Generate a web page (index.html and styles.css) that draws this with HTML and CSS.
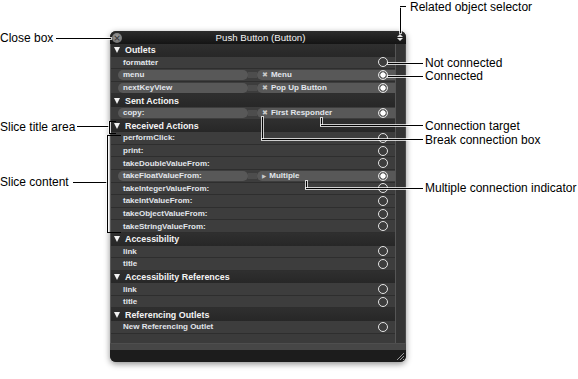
FILE: index.html
```html
<!DOCTYPE html>
<html>
<head>
  <title>Connections Panel</title>
  <link rel="stylesheet" href="styles.css">
</head>
<body>
  <div class="canvas">
    <div class="panel">
      <div class="titlebar">
        <span class="close-box">&#x00D7;</span>
        <span class="title">Push Button (Button)</span>
        <span class="selector"><i class="up"></i><i class="down"></i></span>
      </div>

      <div class="panel-body">
        <div class="slices">
          <div class="slice-title"><i class="tri"></i>Outlets</div>
          <div class="row"><span class="name">formatter</span><span class="port"></span></div>
          <div class="row linked">
            <span class="name pill">menu</span><span class="joint"></span>
            <span class="target pill"><b class="mark">&#x2716;</b>Menu<span class="port on"></span></span>
          </div>
          <div class="row linked">
            <span class="name pill">nextKeyView</span><span class="joint"></span>
            <span class="target pill"><b class="mark">&#x2716;</b>Pop Up Button<span class="port on"></span></span>
          </div>

          <div class="slice-title"><i class="tri"></i>Sent Actions</div>
          <div class="row linked">
            <span class="name pill">copy:</span><span class="joint"></span>
            <span class="target pill"><b class="mark">&#x2716;</b>First Responder<span class="port on"></span></span>
          </div>

          <div class="slice-title"><i class="tri"></i>Received Actions</div>
          <div class="row"><span class="name">performClick:</span><span class="port"></span></div>
          <div class="row"><span class="name">print:</span><span class="port"></span></div>
          <div class="row"><span class="name">takeDoubleValueFrom:</span><span class="port"></span></div>
          <div class="row linked">
            <span class="name pill">takeFloatValueFrom:</span><span class="joint"></span>
            <span class="target pill"><b class="mark multi">&#x25B6;</b>Multiple<span class="port on"></span></span>
          </div>
          <div class="row"><span class="name">takeIntegerValueFrom:</span><span class="port"></span></div>
          <div class="row"><span class="name">takeIntValueFrom:</span><span class="port"></span></div>
          <div class="row"><span class="name">takeObjectValueFrom:</span><span class="port"></span></div>
          <div class="row"><span class="name">takeStringValueFrom:</span><span class="port"></span></div>

          <div class="slice-title"><i class="tri"></i>Accessibility</div>
          <div class="row"><span class="name">link</span><span class="port"></span></div>
          <div class="row"><span class="name">title</span><span class="port"></span></div>

          <div class="slice-title"><i class="tri"></i>Accessibility References</div>
          <div class="row"><span class="name">link</span><span class="port"></span></div>
          <div class="row"><span class="name">title</span><span class="port"></span></div>

          <div class="slice-title"><i class="tri"></i>Referencing Outlets</div>
          <div class="row"><span class="name">New Referencing Outlet</span><span class="port"></span></div>
        </div>
        <div class="scroller"></div>
      </div>

      <div class="band"></div>
      <div class="footer">
        <svg class="grip" width="8" height="8" viewBox="0 0 8 8">
          <path d="M1 8 L8 1 M4 8 L8 4 M7 8 L8 7" stroke="#9a9a9a" stroke-width="1"/>
        </svg>
      </div>
    </div>

    <!-- callouts, left side -->
    <div class="label l-close">Close box</div>
    <div class="wire w-close"></div>

    <div class="label l-title">Slice title area</div>
    <div class="wire w-title"></div>
    <div class="bracket b-title"></div>

    <div class="label l-content">Slice content</div>
    <div class="wire w-content"></div>
    <div class="bracket b-content"></div>

    <!-- callouts, right side -->
    <div class="label l-selector">Related object selector</div>
    <div class="wire w-selector-v"></div>
    <div class="wire w-selector-h"></div>

    <div class="label l-free">Not connected</div>
    <div class="wire w-free"></div>

    <div class="label l-linked">Connected</div>
    <div class="wire w-linked"></div>

    <div class="label l-target">Connection target</div>
    <div class="wire w-target-v"></div>
    <div class="wire w-target-h"></div>

    <div class="label l-break">Break connection box</div>
    <div class="wire w-break-v"></div>
    <div class="wire w-break-h"></div>

    <div class="label l-multi">Multiple connection indicator</div>
    <div class="wire w-multi-v"></div>
    <div class="wire w-multi-h"></div>
  </div>
</body>
</html>
```

FILE: styles.css
```css
body {
  margin: 0;
  background: #fff;
  font-family: "Liberation Sans", Arial, sans-serif;
}

.canvas {
  position: relative;
  width: 578px;
  height: 379px;
  padding: 31px 0 0 110px;
  box-sizing: border-box;
}

/* the inspector panel */
.panel {
  width: 296px;
  height: 331px;
  display: flex;
  flex-direction: column;
  border-radius: 6px;
  background: #3b3b3b;
  box-shadow: 0 2px 6px rgba(0, 0, 0, 0.45);
  overflow: hidden;
}

.titlebar {
  height: 13px;
  display: flex;
  align-items: center;
  padding: 0 3px 0 1px;
  background: linear-gradient(#2c2c2c, #141414);
  flex-shrink: 0;
}

.close-box {
  width: 10px;
  height: 10px;
  margin-left: 1px;
  border-radius: 50%;
  background: radial-gradient(circle at 50% 40%, #a0a0a0, #646464);
  font-family: "DejaVu Sans", sans-serif;
  font-size: 9px;
  font-weight: bold;
  line-height: 10px;
  text-align: center;
  color: #3e3e3e;
}

.title {
  flex: 1;
  text-align: center;
  font-size: 9.7px;
  color: #f2f2f2;
  padding-left: 2px;
}

.selector {
  width: 6px;
  display: flex;
  flex-direction: column;
  align-items: center;
  gap: 1px;
}

.selector i {
  width: 0;
  height: 0;
  border-left: 3px solid transparent;
  border-right: 3px solid transparent;
}

.selector .up { border-bottom: 3px solid #e6e6e6; }
.selector .down { border-top: 3px solid #e6e6e6; }

.panel-body {
  flex: 1;
  display: flex;
  border-left: 1px solid #5a5a5a;
  border-right: 1px solid #4a4a4a;
}

.slices {
  width: 284px;
  background: #3b3b3b;
}

.scroller {
  flex: 1;
  background: #343434;
  border-left: 1px solid #555;
}

.slice-title {
  height: 12.6px;
  display: flex;
  align-items: center;
  padding-left: 3px;
  background: linear-gradient(#2f2f2f, #272727);
  font-size: 8.9px;
  font-weight: bold;
  color: #f4f4f4;
}

.tri {
  width: 0;
  height: 0;
  margin-right: 5px;
  border-left: 3.5px solid transparent;
  border-right: 3.5px solid transparent;
  border-top: 6px solid #f2f2f2;
}

.row {
  height: 12.6px;
  display: flex;
  align-items: center;
  padding-left: 12px;
  box-sizing: border-box;
  border-bottom: 1px solid #2e2e2e;
  background: #3d3d3d;
  font-size: 8px;
  font-weight: bold;
  color: #e2e6ec;
}

.row.linked {
  padding-left: 7px;
}

.pill {
  height: 10px;
  display: flex;
  align-items: center;
  background: #585858;
}

.name.pill {
  width: 130px;
  padding-left: 5px;
  box-sizing: border-box;
  border-radius: 5px;
}

.joint {
  width: 9px;
  height: 6px;
  background: #4d4d4d;
}

.target.pill {
  flex: 1;
  padding-left: 5px;
  border-radius: 5px 0 0 5px;
}

.mark {
  font-family: "DejaVu Sans", sans-serif;
  font-size: 7px;
  color: #c8c8c8;
  margin-right: 3px;
}

.mark.multi {
  font-size: 5.5px;
}

.port {
  width: 10px;
  height: 10px;
  margin-left: auto;
  margin-right: 7px;
  box-sizing: border-box;
  border: 1.4px solid #e4e4e4;
  border-radius: 50%;
}

.port.on {
  background: radial-gradient(circle, #fff 0 2.4px, #6a6a6a 2.8px);
}

.band {
  height: 7px;
  background: #464646;
  border-top: 1px solid #4e4e4e;
  box-sizing: border-box;
}

.footer {
  height: 12px;
  display: flex;
  justify-content: flex-end;
  align-items: flex-end;
  padding: 0 2px 2px 0;
  box-sizing: border-box;
  background: #1c1c1c;
}

/* callouts */
.label {
  position: absolute;
  font-size: 12px;
  line-height: 14px;
  color: #000;
  white-space: nowrap;
}

.wire {
  position: absolute;
  background: #000;
  box-shadow: 0 0 0 1px rgba(255, 255, 255, 0.75);
}

.bracket {
  position: absolute;
  border: 1px solid #000;
  border-right: none;
  box-shadow: -1px 0 0 rgba(255, 255, 255, 0.75), inset 1px 0 0 rgba(255, 255, 255, 0.75);
}

.l-close { left: 0; top: 31px; }
.w-close { left: 56px; top: 38px; width: 55px; height: 1px; }

.l-title { left: 0; top: 120px; }
.w-title { left: 77px; top: 126px; width: 32px; height: 1px; }
.b-title { left: 109px; top: 121px; width: 6px; height: 11px; }

.l-content { left: 0; top: 175px; }
.w-content { left: 73px; top: 182px; width: 34px; height: 1px; }
.b-content { left: 107px; top: 135px; width: 13px; height: 96px; }

.l-selector { left: 410px; top: 0; }
.w-selector-v { left: 400px; top: 6px; width: 1px; height: 27px; }
.w-selector-h { left: 400px; top: 6px; width: 6px; height: 1px; }

.l-free { left: 425px; top: 56px; }
.w-free { left: 388px; top: 63px; width: 35px; height: 1px; }

.l-linked { left: 425px; top: 69px; }
.w-linked { left: 388px; top: 76px; width: 35px; height: 1px; }

.l-target { left: 425px; top: 119px; }
.w-target-v { left: 321px; top: 118px; width: 1px; height: 7px; }
.w-target-h { left: 321px; top: 125px; width: 102px; height: 1px; }

.l-break { left: 425px; top: 133px; }
.w-break-v { left: 262px; top: 117px; width: 1px; height: 22px; }
.w-break-h { left: 262px; top: 139px; width: 161px; height: 1px; }

.l-multi { left: 425px; top: 181px; }
.w-multi-v { left: 306px; top: 181px; width: 1px; height: 7px; }
.w-multi-h { left: 306px; top: 188px; width: 117px; height: 1px; }
```
